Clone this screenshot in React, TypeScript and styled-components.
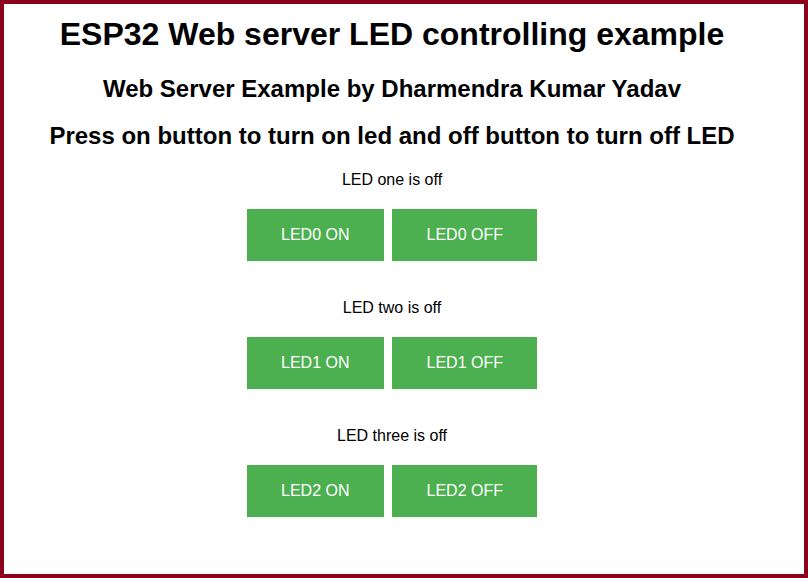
import styled, { createGlobalStyle } from "styled-components";

const leds = [
  { id: 0, name: "one" },
  { id: 1, name: "two" },
  { id: 2, name: "three" },
];

export default function App() {
  return (
    <>
      <GlobalStyle />
      <Frame>
        <Content>
          <Title>ESP32 Web server LED controlling example</Title>
          <Subtitle>Web Server Example by Dharmendra Kumar Yadav</Subtitle>
          <Instructions>
            Press on button to turn on led and off button to turn off LED
          </Instructions>
          {leds.map((led) => (
            <LedBlock key={led.id}>
              <Status>LED {led.name} is off</Status>
              <Buttons>
                <Button>LED{led.id} ON</Button>
                <Button>LED{led.id} OFF</Button>
              </Buttons>
            </LedBlock>
          ))}
        </Content>
      </Frame>
    </>
  );
}

const GlobalStyle = createGlobalStyle`
  html, body {
    margin: 0;
    padding: 0;
    background: #ffffff;
  }

  body {
    font-family: "Liberation Sans", Arial, sans-serif;
    color: #000000;
  }
`;

const Frame = styled.div`
  box-sizing: border-box;
  width: 808px;
  height: 578px;
  border: 4px solid #8b001a;
  overflow: hidden;
`;

const Content = styled.div`
  width: 776px;
  display: flex;
  flex-direction: column;
  align-items: center;
  text-align: center;
`;

const Title = styled.h1`
  margin: 11px 0 0;
  font-size: 32px;
  line-height: 38px;
  font-weight: 700;
`;

const Subtitle = styled.h2`
  margin: 22px 0 0;
  font-size: 24px;
  line-height: 28px;
  font-weight: 700;
`;

const Instructions = styled.h2`
  margin: 19px 0 0;
  font-size: 24px;
  line-height: 28px;
  font-weight: 700;
`;

const LedBlock = styled.div`
  display: flex;
  flex-direction: column;
  align-items: center;
  margin-top: 21px;

  & + & {
    margin-top: 38px;
  }
`;

const Status = styled.p`
  margin: 0;
  font-size: 16px;
  line-height: 18px;
`;

const Buttons = styled.div`
  display: flex;
  gap: 8px;
  margin-top: 20px;
`;

const Button = styled.button`
  border: none;
  background-color: #4caf50;
  color: #ffffff;
  font-family: "Liberation Sans", Arial, sans-serif;
  font-size: 16px;
  line-height: 20px;
  padding: 16px 34.5px;
  cursor: pointer;
`;
